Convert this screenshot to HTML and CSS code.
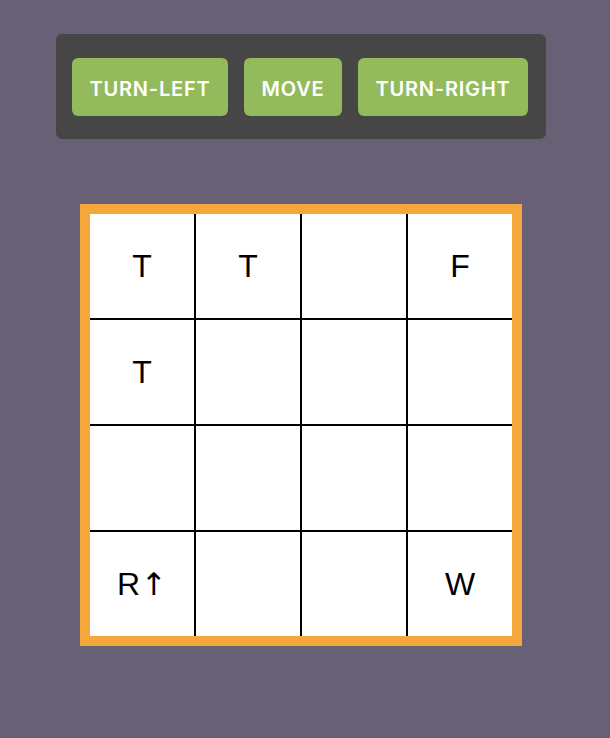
FILE: index.html
```html
<!DOCTYPE html>
<html>
<head>
<meta charset="utf-8">
<link rel="stylesheet" href="styles.css">
</head>
<body>
<div class="page">
  <div class="toolbar">
    <button class="btn">TURN-LEFT</button>
    <button class="btn">MOVE</button>
    <button class="btn">TURN-RIGHT</button>
  </div>
  <div class="board">
    <div class="grid">
      <div class="cell">T</div><div class="cell">T</div><div class="cell"></div><div class="cell">F</div>
      <div class="cell">T</div><div class="cell"></div><div class="cell"></div><div class="cell"></div>
      <div class="cell"></div><div class="cell"></div><div class="cell"></div><div class="cell"></div>
      <div class="cell">R<span class="arrow">↑</span></div><div class="cell"></div><div class="cell"></div><div class="cell">W</div>
    </div>
  </div>
</div>
</body>
</html>
```

FILE: styles.css
```css
html, body {
  margin: 0;
  padding: 0;
  background: #686176;
  height: 100%;
}
.page {
  display: flex;
  flex-direction: column;
  align-items: flex-start;
  padding: 34px 0 0 56px;
}
.toolbar {
  display: flex;
  gap: 16px;
  background: #464646;
  border-radius: 6px;
  padding: 24px 16px 23px 16px;
  width: 458px;
}
.btn {
  flex-shrink: 0;
  white-space: nowrap;
  height: 58px;
  border: none;
  border-radius: 6px;
  background: #94bb5b;
  color: #ffffff;
  font-family: "Inter", "Open Sans", sans-serif;
  font-weight: 600;
  font-size: 20px;
  letter-spacing: 0.8px;
  padding: 3px 17.5px 0 17.5px;
  margin: 0;
  cursor: pointer;
}
.board {
  margin: 65px 0 0 24px;
  border: 10px solid #f4a83b;
  background: #000;
}
.grid {
  display: grid;
  grid-template-columns: repeat(4, 104px);
  grid-template-rows: repeat(4, 104px);
  gap: 2px;
  background: #000;
}
.cell {
  background: #fff;
  display: flex;
  align-items: center;
  justify-content: center;
  font-family: "Liberation Sans", Arial, sans-serif;
  font-size: 32px;
  color: #000;
}
.arrow {
  font-family: "DejaVu Sans", sans-serif;
  font-size: 31px;
  margin-left: 1px;
}
```
